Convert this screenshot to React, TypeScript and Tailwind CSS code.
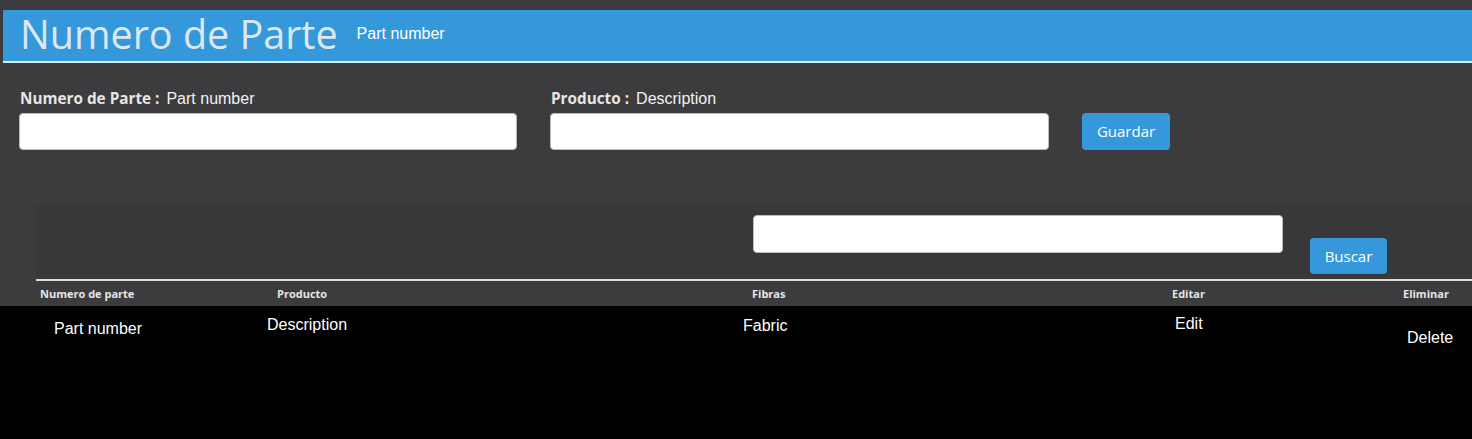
import React from "react";

const open = { fontFamily: '"Open Sans", "Noto Sans", sans-serif' };
const arial = { fontFamily: '"Liberation Sans", Arial, sans-serif' };

export default function App() {
  return (
    <div className="w-full min-h-[439px] bg-[#3c3c3e] pt-[10px] flex flex-col">
      {/* Header */}
      <div className="ml-[3px] h-[53px] bg-[#3598db] border-b-[2px] border-[#d9ecf9] flex items-center pl-[17px]">
        <h1 className="text-[39.5px] leading-none text-[#dde7f0] font-normal mb-[2px]" style={open}>
          Numero de Parte
        </h1>
        <span className="ml-[19px] text-[16px] text-white mb-[4px]" style={arial}>
          Part number
        </span>
      </div>

      {/* Form */}
      <div className="flex items-end pl-[19px] pt-[24px]">
        <div className="flex flex-col w-[498px]">
          <div className="flex items-baseline h-[20px] mb-[6px]">
            <span className="text-[15.3px] font-bold text-[#e6e6e6] ml-[1px]" style={open}>
              Numero de Parte :
            </span>
            <span className="ml-[7px] text-[16px] text-[#f2f2f2]" style={arial}>
              Part number
            </span>
          </div>
          <input className="h-[37px] w-full bg-white rounded-[4px] border border-[#bdbdbd] outline-none" />
        </div>
        <div className="flex flex-col w-[499px] ml-[33px]">
          <div className="flex items-baseline h-[20px] mb-[6px]">
            <span className="text-[15.3px] font-bold text-[#e6e6e6] ml-[1px]" style={open}>
              Producto :
            </span>
            <span className="ml-[7px] text-[16px] text-[#f2f2f2]" style={arial}>
              Description
            </span>
          </div>
          <input className="h-[37px] w-full bg-white rounded-[4px] border border-[#bdbdbd] outline-none" />
        </div>
        <button
          className="ml-[33px] h-[37px] w-[88px] rounded-[4px] bg-[#3598db] text-white text-[15px]"
          style={open}
        >
          Guardar
        </button>
      </div>

      {/* Table area */}
      <div className="ml-[36px] mt-[55px]">
        <div className="h-[76px] bg-[#38383a] flex items-start border-b-[2px] border-[#dcdcdc]">
          <input className="ml-[717px] mt-[10px] h-[38px] w-[530px] bg-white rounded-[4px] border border-[#bdbdbd] outline-none" />
          <button
            className="ml-[27px] mt-[33px] h-[36px] w-[77px] rounded-[4px] bg-[#3598db] text-white text-[15px]"
            style={open}
          >
            Buscar
          </button>
        </div>
        <div
          className="h-[25px] pt-[1px] grid grid-cols-[241px_475px_420px_231px_1fr] items-center text-[11px] font-bold text-[#e6e6e6]"
          style={open}
        >
          <span className="pl-[4px]">Numero de parte</span>
          <span>Producto</span>
          <span>Fibras</span>
          <span>Editar</span>
          <span>Eliminar</span>
        </div>
      </div>

      {/* Body */}
      <div
        className="flex-1 bg-black grid grid-cols-[267px_476px_432px_232px_1fr] text-[16px] text-white leading-[18px] items-start"
        style={arial}
      >
        <span className="pl-[54px] pt-[14px]">Part number</span>
        <span className="pt-[10px]">Description</span>
        <span className="pt-[11px]">Fabric</span>
        <span className="pt-[9px]">Edit</span>
        <span className="pt-[23px]">Delete</span>
      </div>
    </div>
  );
}
